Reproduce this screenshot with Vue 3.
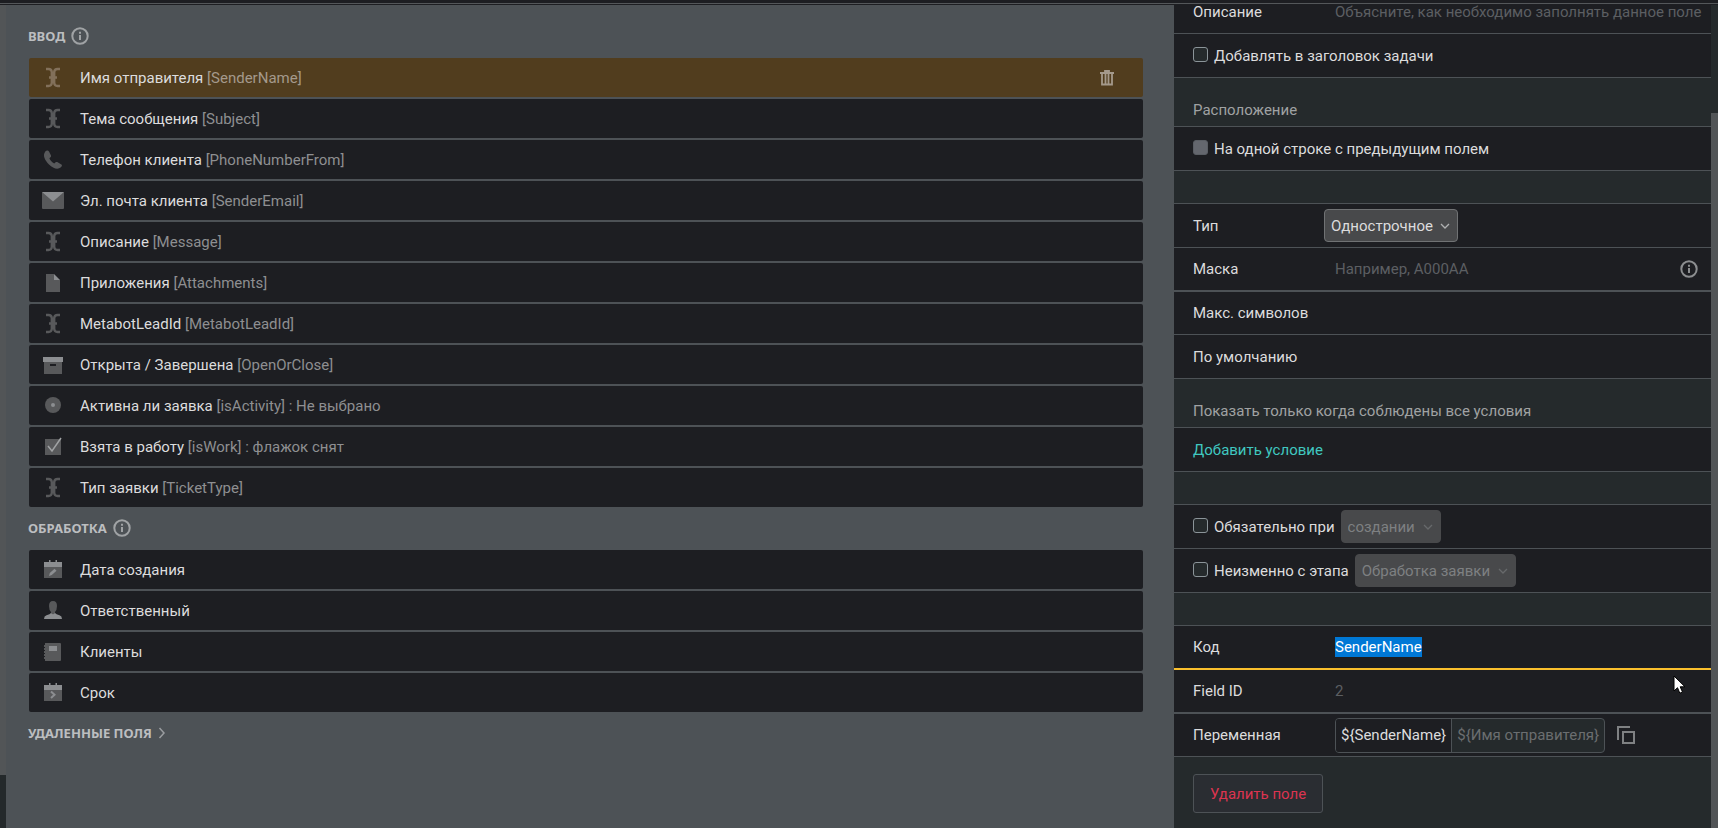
<script setup>
import { onMounted, ref } from 'vue'

const inputFields = [
  { icon: 'text', name: 'Имя отправителя', code: '[SenderName]', active: true },
  { icon: 'text', name: 'Тема сообщения', code: '[Subject]' },
  { icon: 'phone', name: 'Телефон клиента', code: '[PhoneNumberFrom]' },
  { icon: 'mail', name: 'Эл. почта клиента', code: '[SenderEmail]' },
  { icon: 'text', name: 'Описание', code: '[Message]' },
  { icon: 'file', name: 'Приложения', code: '[Attachments]' },
  { icon: 'text', name: 'MetabotLeadId', code: '[MetabotLeadId]' },
  { icon: 'archive', name: 'Открыта / Завершена', code: '[OpenOrClose]' },
  { icon: 'radio', name: 'Активна ли заявка', code: '[isActivity] : Не выбрано' },
  { icon: 'check', name: 'Взята в работу', code: '[isWork] : флажок снят' },
  { icon: 'text', name: 'Тип заявки', code: '[TicketType]' },
]
const processFields = [
  { icon: 'created', name: 'Дата создания' },
  { icon: 'person', name: 'Ответственный' },
  { icon: 'book', name: 'Клиенты' },
  { icon: 'due', name: 'Срок' },
]
const sections = [
  { title: 'ВВОД', fields: inputFields },
  { title: 'ОБРАБОТКА', fields: processFields },
]

const code = ref('SenderName')
const codeInput = ref(null)
onMounted(() => {
  codeInput.value.focus({ preventScroll: true })
  codeInput.value.select()
})
</script>

<template>
  <div class="page">
    <header class="topbar"></header>
    <div class="body">
      <div class="track-left"><div class="thumb-left"></div></div>
      <main class="fields">
        <section v-for="s in sections" :key="s.title" class="section">
          <h2 class="heading">
            {{ s.title }}
            <svg class="info" viewBox="0 0 18 18"><circle cx="9" cy="9" r="7.700" /><path d="M9 8v5M9 4.800v1.900" /></svg>
          </h2>
          <ul class="list">
            <li v-for="f in s.fields" :key="f.name" class="field" :class="{ active: f.active }">
              <svg class="ficon" viewBox="0 0 24 23">
                <g v-if="f.icon === 'text'" class="stroke">
                  <path d="M5 3h2.500q3 0 3.300 3v11q-.3 3-3.300 3H5M19 3h-2.500q-3 0-3.300 3v11q.3 3 3.300 3H19M8 11.500h8" />
                </g>
                <path v-else-if="f.icon === 'phone'" class="dim" d="M4 4C5 2.500 7 2 8 3.500l2 4c.4 1-.5 1.800-1.600 2.700 1 2.300 2.600 4.100 4.800 5.300 1-1.200 2-1.900 3-1.400l4.200 2.300c1 .7.500 1.900-.5 2.900C17 22 12 20.500 8 16.500 4 12.500 1.500 7.500 4 4z" />
                <g v-else-if="f.icon === 'mail'">
                  <rect class="dim" x="1" y="3" width="22" height="17" rx="1" />
                  <path class="lit" d="M1 3h22L12 12.500z" />
                </g>
                <g v-else-if="f.icon === 'file'">
                  <path class="dim" d="M5 3h8v6h6v12H5z" />
                  <path class="lit" d="M13 3l6 6h-6z" />
                </g>
                <g v-else-if="f.icon === 'archive'">
                  <path class="dim" fill-rule="evenodd" d="M3 9h18v12H3zM9 11v2h6v-2z" />
                  <rect class="lit" x="2" y="4" width="20" height="5" />
                </g>
                <g v-else-if="f.icon === 'radio'">
                  <circle class="dim" cx="12" cy="11" r="8" />
                  <circle class="lit" cx="12" cy="11" r="2" />
                </g>
                <g v-else-if="f.icon === 'check'">
                  <rect class="dim" x="4" y="4" width="16" height="16" />
                  <path class="mark" d="M7 11l4 5 9-13" />
                </g>
                <g v-else-if="f.icon === 'person'">
                  <path class="dim" d="M8 7q0-5 4-5t4 5q0 4-2 6v3h-4v-3q-2-2-2-6z" />
                  <path class="lit" d="M10 14q2 2.500 4 0 1 1.500 4.500 2.300Q21 17 21 20H3q0-3 2.500-3.700Q9 15.500 10 14z" />
                </g>
                <g v-else-if="f.icon === 'book'">
                  <path class="dim" d="M4 3h15q1 0 1 1v16q0 1-1 1H4v-2H3v-2h1v-1H3v-2h1v-1H3v-2h1v-1H3V8h1V7H3V5h1z" />
                  <rect class="lit" x="8" y="6" width="8" height="5" />
                </g>
                <g v-else>
                  <rect class="dim" x="3" y="8" width="18" height="12" />
                  <path class="lit" d="M3 4h5V2h1.500v2h5V2H16v2h5v5H3z" />
                  <path v-if="f.icon === 'created'" class="lit" d="M8 18l.8-3 4.700-4.200 2 2-4.700 4.200z" />
                  <path v-else class="arrow" d="M10 10.500l3.500 3.300L10 17" />
                </g>
              </svg>
              <span>{{ f.name }} <span class="code">{{ f.code }}</span></span>
              <button v-if="f.active" class="trash" aria-label="Удалить">
                <svg viewBox="0 0 14 16"><path d="M0 3h14M5 2.500V1h4v1.500M2 3v11.500h10V3M5.500 4v10M8.500 4v10" /></svg>
              </button>
            </li>
          </ul>
        </section>
        <button class="heading deleted">
          УДАЛЕННЫЕ ПОЛЯ
          <svg viewBox="0 0 8 12"><path d="M1.500 1l4.500 5-4.500 5" /></svg>
        </button>
      </main>

      <aside class="panel">
        <form class="form" @submit.prevent>
          <div class="row first">
            <label class="name" for="desc">Описание</label>
            <input id="desc" class="value" placeholder="Объясните, как необходимо заполнять данное поле">
          </div>
          <div class="row">
            <input id="title" type="checkbox" class="tick"><label for="title">Добавлять в заголовок задачи</label>
          </div>
          <h3 class="group">Расположение</h3>
          <div class="row">
            <input id="inline" type="checkbox" class="tick" disabled><label for="inline">На одной строке с предыдущим полем</label>
          </div>
          <div class="gap"></div>
          <div class="row">
            <label class="name" for="type">Тип</label>
            <span class="pick">
              <select id="type"><option>Однострочное</option></select>
              <svg viewBox="0 0 10 6"><path d="M1 1l4 4 4-4" /></svg>
            </span>
          </div>
          <div class="row thick">
            <label class="name" for="mask">Маска</label>
            <input id="mask" class="value" placeholder="Например, A000AA">
            <svg class="info" viewBox="0 0 18 18"><circle cx="9" cy="9" r="7.700" /><path d="M9 8v5M9 4.800v1.900" /></svg>
          </div>
          <div class="row short">
            <label class="name" for="max">Макс. символов</label>
            <input id="max" class="value">
          </div>
          <div class="row">
            <label class="name" for="def">По умолчанию</label>
            <input id="def" class="value">
          </div>
          <h3 class="group">Показать только когда соблюдены все условия</h3>
          <div class="row"><a class="add" href="#">Добавить условие</a></div>
          <div class="gap"></div>
          <div class="row">
            <input id="req" type="checkbox" class="tick"><label for="req">Обязательно при</label>
            <span class="pick off">
              <select aria-label="Обязательно при" disabled><option>создании</option></select>
              <svg viewBox="0 0 10 6"><path d="M1 1l4 4 4-4" /></svg>
            </span>
          </div>
          <div class="row">
            <input id="fix" type="checkbox" class="tick"><label for="fix">Неизменно с этапа</label>
            <span class="pick off">
              <select aria-label="Неизменно с этапа" disabled><option>Обработка заявки</option></select>
              <svg viewBox="0 0 10 6"><path d="M1 1l4 4 4-4" /></svg>
            </span>
          </div>
          <div class="gap"></div>
          <div class="row thick focus">
            <label class="name" for="code">Код</label>
            <input id="code" ref="codeInput" v-model="code" class="value">
          </div>
          <div class="row thick">
            <span class="name">Field ID</span><span class="value muted">2</span>
          </div>
          <div class="row short">
            <span class="name">Переменная</span>
            <span class="variants">
              <button type="button" class="on">${SenderName}</button>
              <button type="button">${Имя отправителя}</button>
            </span>
            <button type="button" class="copy" aria-label="Копировать">
              <svg viewBox="0 0 18 18"><path d="M1 14V1h12M6 6h11v11H6z" /></svg>
            </button>
          </div>
          <button type="button" class="remove">Удалить поле</button>
        </form>
        <div class="track-right"><div class="thumb-right"></div></div>
      </aside>
    </div>
    <svg class="pointer" viewBox="0 0 13 20"><path d="M1 1v15l3.500-3.300 2.300 5.500 2.700-1.200-2.300-5.200H12z" /></svg>
  </div>
</template>

<style>
body { background: #4d5256; }
</style>

<style scoped>
* { box-sizing: border-box; }
.page {
  position: relative;
  display: flex;
  flex-direction: column;
  height: 100vh;
  overflow: hidden;
  background: #4d5256;
  color: #dcdcdd;
  font: 15px/20px Roboto, "Noto Sans", sans-serif;
}
button, input, select { font: inherit; color: inherit; margin: 0; padding: 0; border: 0; background: none; outline: none; }
svg { display: block; flex: none; fill: none; }
.topbar { flex: none; height: 5px; background: linear-gradient(#1d1e22 3px, #54575a 3px, #54575a 4px, #1d1e22 4px); }
.body { flex: 1; display: flex; min-height: 0; }
.track-left { flex: none; width: 6px; background: #24292b; }
.thumb-left { height: 770px; background: #525557; }
.fields { flex: 1; min-width: 0; padding: 20px 31px 0 22px; }
.heading {
  display: flex;
  align-items: center;
  gap: 6px;
  height: 22px;
  margin: 0 0 11px;
  font-family: "Noto Sans", sans-serif;
  font-size: 13px;
  font-weight: 700;
  color: #bcbec0;
}
.info { width: 18px; height: 18px; stroke: #a0a3a5; stroke-width: 2; }
.list { display: grid; gap: 2px; margin: 0 0 10px 1px; padding: 0; list-style: none; }
.field {
  display: flex;
  align-items: center;
  height: 39px;
  padding: 0 29px 0 12px;
  border-radius: 2px;
  background: #1d1e22;
}
.field.active { background: #513d1e; }
.ficon { width: 24px; height: 23px; margin-right: 15px; }
.dim { fill: #58595b; }
.lit { fill: #8c8e91; }
.stroke { stroke: #58595b; stroke-width: 2.4; }
.active .stroke { stroke: #82705a; }
.mark { stroke: #a0a2a4; stroke-width: 1.5; }
.arrow { stroke: #8c8e91; stroke-width: 2; }
.code { color: #8e8f91; }
.active .code { color: #a4998b; }
.trash { margin-left: auto; }
.trash svg { width: 14px; height: 16px; stroke: #a4998b; stroke-width: 1.8; }
.deleted svg { width: 8px; height: 12px; stroke: #9a9da0; stroke-width: 1.5; }

.panel { flex: none; display: flex; width: 544px; min-height: 0; overflow: hidden; background: #252a2c; }
.form { flex: 1; min-width: 0; }
.row {
  display: flex;
  align-items: center;
  height: 44px;
  padding-left: 19px;
  border-bottom: 1px solid #4d5256;
  background: #1d1e22;
}
.row.first { height: 29px; padding-bottom: 14px; }
.row.short { height: 43px; }
.row.thick { border-bottom-width: 2px; }
.row.focus { border-color: #fbc02d; }
.name { flex: none; width: 131px; }
.value { flex: 1; min-width: 0; padding-left: 11px; }
.value::placeholder { color: #5c5f62; opacity: 1; }
.value::selection { background: rgba(0, 120, 215, 0.996); color: #fff; }
.muted { color: #5c5f62; }
.row .info { margin-right: 13px; stroke: #8c8e90; }
.group {
  height: 49px;
  margin: 0;
  padding: 22px 0 0 19px;
  border-bottom: 1px solid #4d5256;
  font-size: 15px;
  font-weight: 400;
  color: #a0a2a3;
}
.gap { height: 33px; border-bottom: 1px solid #4d5256; }
.tick {
  appearance: none;
  flex: none;
  width: 15px;
  height: 15px;
  margin: 0 6px 2px 0;
  border: 1px solid #8b9499;
  border-radius: 3px;
  background: #252a2c;
}
.tick:disabled { border-color: #5a5e64; background: #64676e; }
.pick { position: relative; display: flex; }
.pick select {
  appearance: none;
  height: 33px;
  padding: 0 24px 0 6px;
  border: 1px solid #707274;
  border-radius: 4px;
  background: #48494b;
}
.pick svg { position: absolute; right: 8px; top: 14px; width: 10px; height: 6px; stroke: #b0b1b2; stroke-width: 1.3; pointer-events: none; }
.pick.off { margin-left: 6px; }
.pick.off select { border-color: #48494b; color: #7e8082; opacity: 1; }
.pick.off svg { stroke: #67696b; }
.add { color: #40c8c0; text-decoration: none; }
.variants { display: flex; margin-left: 11px; border: 1px solid #4d5256; border-radius: 4px; overflow: hidden; background: #252a2c; }
.variants button { height: 33px; padding: 0 5px; color: #6b6e70; }
.variants button.on { border-right: 1px solid #4d5256; background: #1d1e22; color: #dcdcdd; }
.copy { margin-left: 12px; }
.copy svg { width: 18px; height: 18px; stroke: #7f8183; stroke-width: 2; }
.remove {
  height: 39px;
  margin: 17px 19px;
  padding: 0 16px;
  border: 1px solid #4d5256;
  border-radius: 3px;
  background: #2a2d32;
  color: #dc3450;
}
.track-right { flex: none; width: 7px; padding-top: 108px; background: #252a2c; }
.thumb-right { height: 100%; background: #525557; }
.pointer { position: absolute; left: 97.4%; top: 675px; width: 13px; height: 20px; fill: #fff; stroke: #000; stroke-width: 1; }
</style>
